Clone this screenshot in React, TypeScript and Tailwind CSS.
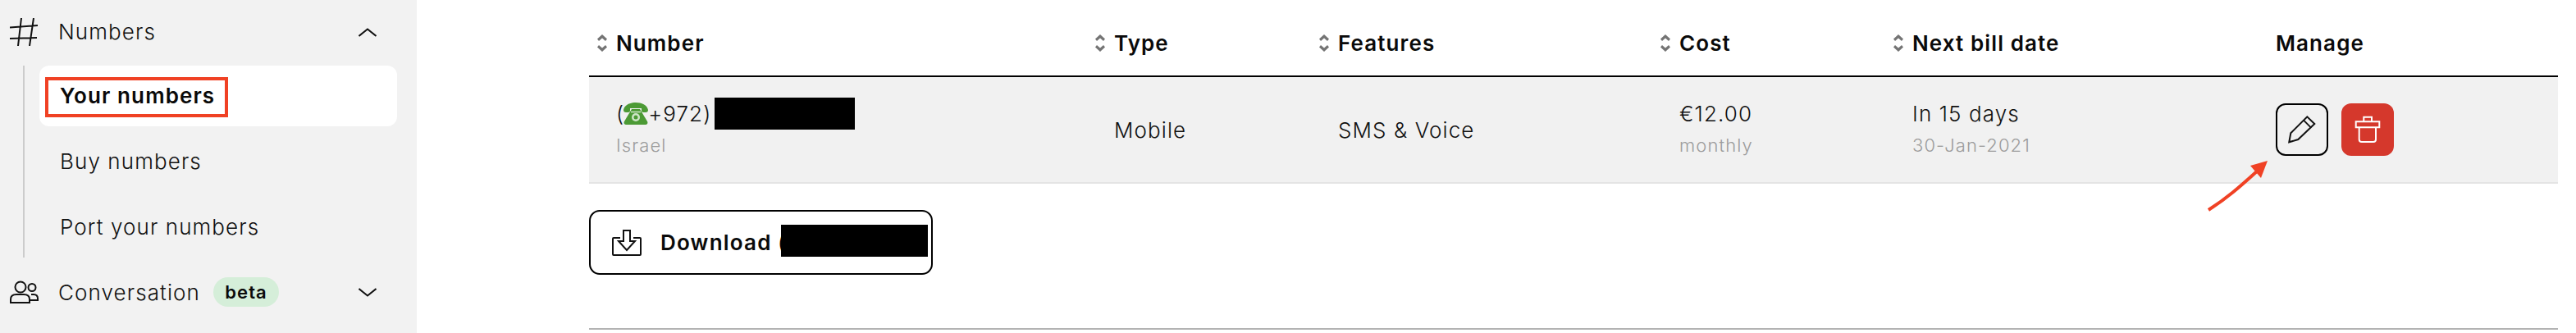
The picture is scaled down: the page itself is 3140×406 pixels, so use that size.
const columns = "grid grid-cols-[607px_273px_416px_284px_443px_1fr]";

function SortIcon() {
  return (
    <svg width="12" height="21" viewBox="0 0 12 21" className="shrink-0" fill="#747474">
      <path d="M6 0 12 5.5 10 8 6 4.5 2 8 0 5.5Z" />
      <path d="M6 21 0 15.5 2 13 6 16.5 10 13 12 15.5Z" />
    </svg>
  );
}

function HeaderCell({ label, sortable = true }: { label: string; sortable?: boolean }) {
  return (
    <div className={sortable ? "flex items-center gap-[11px] pl-[9px]" : "pl-8"}>
      {sortable && <SortIcon />}
      <span className="text-[26px] font-semibold tracking-[1.1px] text-[#0a0a0a]">{label}</span>
    </div>
  );
}

function TwoLine({ top, bottom }: { top: string; bottom: string }) {
  return (
    <div className="pl-8">
      <div className="text-[26px] leading-[39px] text-[#111]">{top}</div>
      <div className="text-[22px] leading-[39px] text-[#9c9c9c]">{bottom}</div>
    </div>
  );
}

function PhoneEmoji() {
  return (
    <svg width="30" height="27" viewBox="0 0 30 27" className="-ml-px shrink-0">
      <path d="M0 9C1 3 8 0 15 0s14 3 15 9c0 2-1 3-3 3h-3c-1 0-2-1-2-2V7H8v3c0 1-1 2-2 2H3c-2 0-3-1-3-3Z" fill="#4c9a35" />
      <path d="M10 8h10l9 15c1 2 0 4-2 4H3c-2 0-3-2-2-4Z" fill="#4c9a35" />
      <circle cx="15" cy="18" r="5" fill="#cfe5c8" />
      <circle cx="15" cy="18" r="2.5" fill="#4c9a35" />
      <path d="M9 11.5h12" stroke="#cfe5c8" strokeWidth="1.5" />
    </svg>
  );
}

function Chevron({ up }: { up?: boolean }) {
  return (
    <svg width="22" height="11" viewBox="0 0 22 11" fill="none" stroke="#111" strokeWidth="2">
      <path d={up ? "M0.5 10 11 1.5 21.5 10" : "M0.5 1 11 9.5 21.5 1"} />
    </svg>
  );
}

function HashIcon() {
  return (
    <svg width="34" height="34" viewBox="0 0 34 34" fill="none" stroke="#111" strokeWidth="2">
      <path d="M10 34 14 0M24 34 29 0M0 11.5 34 9M0 25 33 24" />
    </svg>
  );
}

function PeopleIcon() {
  return (
    <svg width="35" height="28" viewBox="0 0 35 28" fill="none" stroke="#111" strokeWidth="2">
      <circle cx="13" cy="8" r="6.5" />
      <circle cx="27" cy="8.5" r="4.5" />
      <path d="M1 27V23c0-4 3-6 7-6h9c4 0 7 2 7 6v4Z" />
      <path d="M26 17h3c3 0 5 2 5 5v2h-9" />
    </svg>
  );
}

function DownloadIcon() {
  return (
    <svg width="36" height="32" viewBox="0 0 36 32" fill="none" stroke="#111" strokeWidth="2">
      <path d="M10 10H2a1 1 0 0 0-1 1v19a1 1 0 0 0 1 1h32a1 1 0 0 0 1-1V11a1 1 0 0 0-1-1h-8" />
      <path d="M14 1h8v13h6l-10 11L8 14h6Z" />
    </svg>
  );
}

function PencilIcon() {
  return (
    <svg width="64" height="64" viewBox="0 0 64 64" fill="none" stroke="#111" strokeWidth="2">
      <path d="M16.3 47.3 18.3 36.3 38.3 16.3 47.3 25 27.3 44Z" />
      <path d="M34 20.6 43 29.6" />
    </svg>
  );
}

function TrashIcon() {
  return (
    <svg width="64" height="64" viewBox="0 0 64 64" fill="none" stroke="#fff" strokeWidth="2">
      <path d="M17.7 22.3H46.3V29.3H17.7Z" />
      <path d="M27.3 22.3V16.7H37V22.3" />
      <path d="M21.7 29.3V44a3 3 0 0 0 3 3H39a3 3 0 0 0 3-3V29.3" />
    </svg>
  );
}

function Sidebar() {
  return (
    <aside className="relative h-full w-[508px] shrink-0 bg-[#f2f2f2]">
      <div className="flex h-[78px] items-center pl-3 pr-[49px]">
        <HashIcon />
        <span className="ml-[25px] flex-1 pb-0.5 text-[26px] text-[#111]">Numbers</span>
        <Chevron up />
      </div>
      <div className="mt-0.5 ml-7 flex w-[456px] flex-col gap-1.5 border-l-2 border-[#cccccc] pl-[18px]">
        <div className="flex h-[74px] items-center rounded-xl bg-white pb-0.5 pl-[25px] text-[26px] font-semibold tracking-[1.1px] text-[#0a0a0a]">
          Your numbers
        </div>
        <div className="flex h-[74px] items-center pb-0.5 pl-[25px] text-[26px] text-[#111]">Buy numbers</div>
        <div className="flex h-[74px] items-center pb-0.5 pl-[25px] text-[26px] text-[#111]">Port your numbers</div>
      </div>
      <div className="mt-0.5 flex h-[80px] items-center pl-3 pr-[49px]">
        <PeopleIcon />
        <span className="ml-[24px] text-[26px] text-[#111]">Conversation</span>
        <span className="ml-[16px] flex h-9 w-20 items-center justify-center rounded-full bg-[#d5eed9] text-[22px] font-semibold text-[#0a0a0a]">
          beta
        </span>
        <span className="ml-auto">
          <Chevron />
        </span>
      </div>
      {/* red annotation round the active item */}
      <div className="absolute left-[55px] top-[94px] h-[49px] w-[223px] border-4 border-[#f04124]" />
    </aside>
  );
}

export default function App() {
  return (
    <div className="relative flex h-[406px] w-[3140px] overflow-hidden bg-white font-['Inter',sans-serif] font-light tracking-[1.1px]">
      <Sidebar />
      <main className="ml-[210px] w-[2400px] shrink-0">
        <div className={`${columns} h-[94px] items-center border-b-2 border-black pt-3 pl-px`}>
          <HeaderCell label="Number" />
          <HeaderCell label="Type" />
          <HeaderCell label="Features" />
          <HeaderCell label="Cost" />
          <HeaderCell label="Next bill date" />
          <HeaderCell label="Manage" sortable={false} />
        </div>
        <div className={`${columns} h-[130px] items-center border-b-2 border-[#e4e4e4] bg-[#f1f1f1] pl-px`}>
          <div className="pl-8">
            <div className="relative flex items-center text-[26px] leading-[39px] text-[#111]">
              <span>(</span>
              <PhoneEmoji />
              <span>+972)</span>
              <span className="absolute left-[120px] top-0 h-[39px] w-[171px] bg-black" />
            </div>
            <div className="text-[22px] leading-[39px] text-[#9c9c9c]">Israel</div>
          </div>
          <div className="pl-8 text-[26px] text-[#111]">Mobile</div>
          <div className="pl-8 text-[26px] text-[#111]">SMS &amp; Voice</div>
          <TwoLine top="€12.00" bottom="monthly" />
          <TwoLine top="In 15 days" bottom="30-Jan-2021" />
          <div className="flex gap-4 pl-8">
            <button className="size-16 rounded-xl border-2 border-black [&>svg]:-m-0.5">
              <PencilIcon />
            </button>
            <button className="size-16 rounded-xl bg-[#d5382c]">
              <TrashIcon />
            </button>
          </div>
        </div>
        <button className="relative mt-8 flex h-[79px] w-[419px] items-center gap-[23px] rounded-[13px] border-2 border-black bg-white pl-[26px] text-[26px] font-semibold tracking-[1.2px] text-[#0a0a0a]">
          <DownloadIcon />
          <span>Download (</span>
          <span className="absolute left-[232px] top-4 h-[39px] w-[179px] bg-black" />
        </button>
        <div className="mt-[65px] h-0.5 bg-[#b3b3b3]" />
      </main>
      {/* red annotation arrow pointing at the edit button */}
      <svg className="absolute left-[2680px] top-[190px]" width="100" height="80" viewBox="0 0 100 80" fill="none">
        <path d="M12 66C34 52 50 38 72 18" stroke="#f04124" strokeWidth="4" />
        <path d="M84 6 63 12 76 27Z" fill="#f04124" />
      </svg>
    </div>
  );
}
